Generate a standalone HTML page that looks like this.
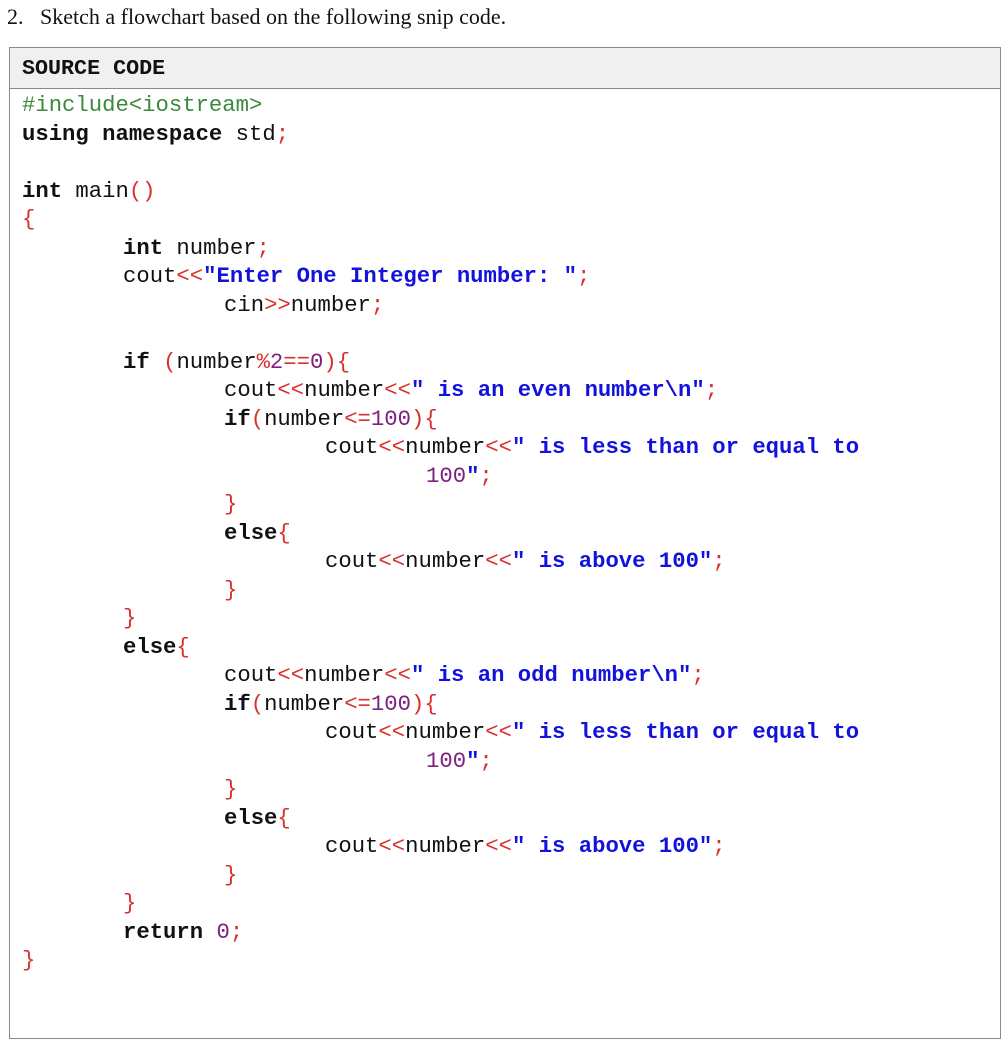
<!DOCTYPE html>
<html><head><meta charset="utf-8"><style>
html,body{margin:0;padding:0;background:#fff;width:1007px;height:1048px;overflow:hidden}
.t{position:absolute;left:7px;top:4px;font-family:"Liberation Serif",serif;font-size:22px;color:#111}
.box{position:absolute;left:9px;top:47px;width:992px;height:992px;border:1px solid #8a8a8a;box-sizing:border-box}
.hd{height:41px;background:#f0f0f0;border-bottom:1px solid #8a8a8a;box-sizing:border-box;font-family:"Liberation Mono",monospace;font-weight:bold;font-size:21.7px;line-height:41px;padding-left:12px;color:#111}
.code{position:absolute;left:0;top:43px;font-family:"Liberation Mono",monospace;font-size:22.25px;line-height:28.5px;color:#111}
.l{height:28.5px;white-space:pre}
.g{color:#3b8a3b}.r{color:#d9302c}.b{color:#1212dc;font-weight:bold}.p{color:#80207f}.k{font-weight:bold}
.i0{padding-left:12px}.i1{padding-left:113px}.i2{padding-left:214px}.i3{padding-left:315px}.i4{padding-left:416px}
</style></head><body>
<div class="t">2.&nbsp;&nbsp;&nbsp;Sketch a flowchart based on the following snip code.</div>
<div class="box"><div class="hd">SOURCE CODE</div>
<div class="code"><div class="l i0 g">#include&lt;iostream&gt;</div>
<div class="l i0"><span class="k">using namespace</span> std<span class="r">;</span></div>
<div class="l"></div>
<div class="l i0"><span class="k">int</span> main<span class="r">()</span></div>
<div class="l i0 r">{</div>
<div class="l i1"><span class="k">int</span> number<span class="r">;</span></div>
<div class="l i1">cout<span class="r">&lt;&lt;</span><span class="b">"Enter One Integer number: "</span><span class="r">;</span></div>
<div class="l i2">cin<span class="r">&gt;&gt;</span>number<span class="r">;</span></div>
<div class="l"></div>
<div class="l i1"><span class="k">if</span> <span class="r">(</span>number<span class="r">%</span><span class="p">2</span><span class="r">==</span><span class="p">0</span><span class="r">){</span></div>
<div class="l i2">cout<span class="r">&lt;&lt;</span>number<span class="r">&lt;&lt;</span><span class="b">" is an even number\n"</span><span class="r">;</span></div>
<div class="l i2"><span class="k">if</span><span class="r">(</span>number<span class="r">&lt;=</span><span class="p">100</span><span class="r">){</span></div>
<div class="l i3">cout<span class="r">&lt;&lt;</span>number<span class="r">&lt;&lt;</span><span class="b">" is less than or equal to</span></div>
<div class="l i4"><span class="p">100</span><span class="b">"</span><span class="r">;</span></div>
<div class="l i2 r">}</div>
<div class="l i2"><span class="k">else</span><span class="r">{</span></div>
<div class="l i3">cout<span class="r">&lt;&lt;</span>number<span class="r">&lt;&lt;</span><span class="b">" is above 100"</span><span class="r">;</span></div>
<div class="l i2 r">}</div>
<div class="l i1 r">}</div>
<div class="l i1"><span class="k">else</span><span class="r">{</span></div>
<div class="l i2">cout<span class="r">&lt;&lt;</span>number<span class="r">&lt;&lt;</span><span class="b">" is an odd number\n"</span><span class="r">;</span></div>
<div class="l i2"><span class="k">if</span><span class="r">(</span>number<span class="r">&lt;=</span><span class="p">100</span><span class="r">){</span></div>
<div class="l i3">cout<span class="r">&lt;&lt;</span>number<span class="r">&lt;&lt;</span><span class="b">" is less than or equal to</span></div>
<div class="l i4"><span class="p">100</span><span class="b">"</span><span class="r">;</span></div>
<div class="l i2 r">}</div>
<div class="l i2"><span class="k">else</span><span class="r">{</span></div>
<div class="l i3">cout<span class="r">&lt;&lt;</span>number<span class="r">&lt;&lt;</span><span class="b">" is above 100"</span><span class="r">;</span></div>
<div class="l i2 r">}</div>
<div class="l i1 r">}</div>
<div class="l i1"><span class="k">return</span> <span class="p">0</span><span class="r">;</span></div>
<div class="l i0 r">}</div>
</div></div>
</body></html>
